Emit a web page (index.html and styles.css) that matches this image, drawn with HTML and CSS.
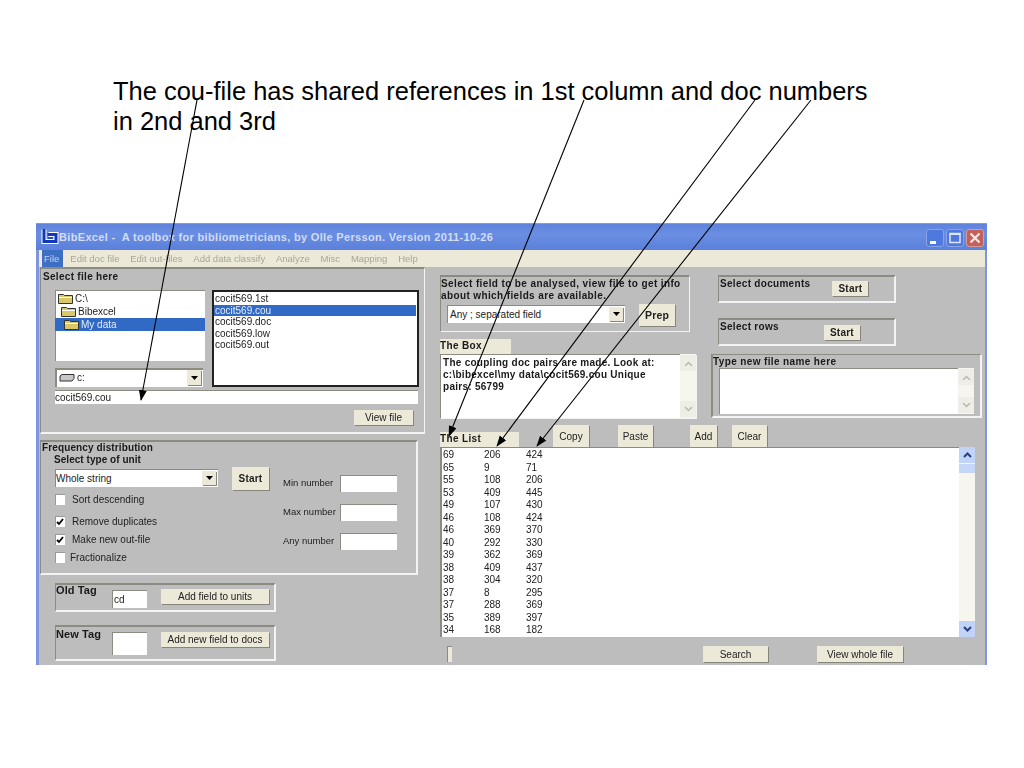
FILE: index.html
```html
<!DOCTYPE html>
<html lang="en">
<head>
<meta charset="utf-8">
<title>BibExcel</title>
<link rel="stylesheet" href="styles.css">
</head>
<body>
<div class="slide">
  <h1 class="caption">The cou-file has shared references in 1st column and doc numbers in 2nd and 3rd</h1>
  <div class="window">
    <div class="titlebar">
      <svg class="logo" width="18" height="18" viewBox="0 0 18 18"><path d="M3 1.500V13.500H15V6.500H7.500" fill="none" stroke="#fff" stroke-width="5"/><path d="M3 1V13.500H15V6.500H6.500" fill="none" stroke="#1238b8" stroke-width="3"/><path d="M7 10h5" stroke="#1238b8" stroke-width="1.500"/></svg>
      <span class="title-text">BibExcel -&nbsp; A toolbox for bibliometricians, by Olle Persson. Version 2011-10-26</span>
      <div class="win-buttons">
        <span class="win-btn"><svg width="18" height="18" viewBox="0 0 18 18"><rect x="4" y="12" width="6" height="3" fill="#fff"/></svg></span>
        <span class="win-btn"><svg width="18" height="18" viewBox="0 0 18 18"><rect x="4" y="4.500" width="10" height="9" fill="none" stroke="#dfe6fa" stroke-width="1.500"/><rect x="3.500" y="4" width="11" height="2" fill="#dfe6fa"/></svg></span>
        <span class="win-btn win-close"><svg width="18" height="18" viewBox="0 0 18 18"><path d="M4.500 4.500l9 9M13.500 4.500l-9 9" stroke="#f6e4e2" stroke-width="2.400"/></svg></span>
      </div>
    </div>
    <div class="menubar">
      <span class="menu-item menu-active">File</span>
      <span class="menu-item">Edit doc file</span>
      <span class="menu-item">Edit out-files</span>
      <span class="menu-item">Add data classify</span>
      <span class="menu-item">Analyze</span>
      <span class="menu-item">Misc</span>
      <span class="menu-item">Mapping</span>
      <span class="menu-item">Help</span>
    </div>
    <div class="form">
      <div class="col-left">
        <section class="frame file-frame">
          <div class="label-bold file-title">Select file here</div>
          <div class="file-grid">
            <div class="dirlist">
              <div class="dir-row dir-0"><svg class="folder" width="15" height="11" viewBox="0 0 15 11"><path d="M0.500 1.500h5l1 1h8v8H0.500z" fill="#d8c868" stroke="#333"/><path d="M1 4.500h13" stroke="#fff"/></svg>C:\</div>
              <div class="dir-row dir-1"><svg class="folder" width="15" height="11" viewBox="0 0 15 11"><path d="M0.500 1.500h5l1 1h8v8H0.500z" fill="#d8c868" stroke="#333"/><path d="M1 4.500h13" stroke="#fff"/></svg>Bibexcel</div>
              <div class="dir-row dir-2 selected"><svg class="folder" width="15" height="11" viewBox="0 0 15 11"><path d="M0.500 1.500h5l1 1h8v8H0.500z" fill="#d8c868" stroke="#333"/><path d="M1 4.500h13" stroke="#fff"/></svg>My data</div>
            </div>
            <div class="filelist">
              <div class="file-row">cocit569.1st</div>
              <div class="file-row selected">cocit569.cou</div>
              <div class="file-row">cocit569.doc</div>
              <div class="file-row">cocit569.low</div>
              <div class="file-row">cocit569.out</div>
            </div>
            <div class="combo drive-combo">
              <svg class="drive" width="16" height="8" viewBox="0 0 16 8"><path d="M3 0.500h12v4l-2 2.500H1V2z" fill="#c8c8c8" stroke="#333"/></svg>
              <span>c:</span>
              <span class="combo-arrow"><svg width="7" height="4" viewBox="0 0 7 4"><path d="M0 0h7L3.500 4z" fill="#000"/></svg></span>
            </div>
          </div>
          <div class="text-input file-name">cocit569.cou</div>
          <div class="view-row"><span class="btn view-btn">View file</span></div>
        </section>

        <section class="frame freq-frame">
          <div class="label-bold freq-title">Frequency distribution</div>
          <div class="freq-body">
            <div class="freq-left">
              <div class="label-bold unit-title">Select type of unit</div>
              <div class="unit-row">
                <div class="combo unit-combo"><span>Whole string</span><span class="combo-arrow"><svg width="7" height="4" viewBox="0 0 7 4"><path d="M0 0h7L3.500 4z" fill="#000"/></svg></span></div>
                <span class="btn btn-bold start-unit">Start</span>
              </div>
              <div class="check-row check-sort"><span class="check"></span><span class="check-label">Sort descending</span></div>
              <div class="check-row check-dup"><span class="check"><svg width="10" height="10" viewBox="0 0 10 10"><path d="M2 5l2 2 4-5" fill="none" stroke="#000" stroke-width="1.800"/></svg></span><span class="check-label">Remove duplicates</span></div>
              <div class="check-row check-new"><span class="check"><svg width="10" height="10" viewBox="0 0 10 10"><path d="M2 5l2 2 4-5" fill="none" stroke="#000" stroke-width="1.800"/></svg></span><span class="check-label">Make new out-file</span></div>
              <div class="check-row check-frac"><span class="check"></span><span class="check-label check-label-tight">Fractionalize</span></div>
            </div>
            <div class="freq-right">
              <div class="num-row"><span class="num-label">Min number</span><span class="text-input num-input"></span></div>
              <div class="num-row"><span class="num-label">Max number</span><span class="text-input num-input"></span></div>
              <div class="num-row"><span class="num-label">Any number</span><span class="text-input num-input"></span></div>
            </div>
          </div>
        </section>

        <section class="frame tag-frame old-tag">
          <span class="tag-label">Old Tag</span>
          <span class="text-input tag-input old-input">cd</span>
          <span class="btn tag-btn">Add field to units</span>
        </section>
        <section class="frame tag-frame new-tag">
          <span class="tag-label">New Tag</span>
          <span class="text-input tag-input new-input"></span>
          <span class="btn tag-btn">Add new field to docs</span>
        </section>
      </div>

      <div class="col-right">
        <div class="upper">
          <div class="upper-left">
            <section class="frame field-frame">
              <div class="label-bold field-title">Select field to be analysed, view file to get info about which fields are available.</div>
              <div class="field-row">
                <div class="combo field-combo"><span>Any ; separated field</span><span class="combo-arrow"><svg width="7" height="4" viewBox="0 0 7 4"><path d="M0 0h7L3.500 4z" fill="#000"/></svg></span></div>
                <span class="btn btn-bold prep-btn">Prep</span>
              </div>
            </section>
            <div class="tab-label box-label">The Box</div>
            <div class="box">
              <div class="box-text">The coupling doc pairs are made. Look at: c:\bibexcel\my data\cocit569.cou Unique pairs: 56799</div>
              <div class="scroll scroll-faded"><span class="sb-btn"><svg width="9" height="5" viewBox="0 0 9 5"><path d="M1 5l3.500-3.500L8 5" fill="none" stroke="#b8b8b0" stroke-width="1.500"/></svg></span><span class="sb-btn"><svg width="9" height="5" viewBox="0 0 9 5"><path d="M1 0l3.500 3.500L8 0" fill="none" stroke="#b8b8b0" stroke-width="1.500"/></svg></span></div>
            </div>
          </div>
          <div class="upper-right">
            <section class="frame small-frame docs-frame">
              <span class="label-bold">Select documents</span>
              <span class="btn btn-bold small-start docs-start">Start</span>
            </section>
            <section class="frame small-frame rows-frame">
              <span class="label-bold">Select rows</span>
              <span class="btn btn-bold small-start rows-start">Start</span>
            </section>
            <section class="frame type-frame">
              <div class="label-bold type-title">Type new file name here</div>
              <div class="type-box">
                <div class="scroll scroll-faded"><span class="sb-btn"><svg width="9" height="5" viewBox="0 0 9 5"><path d="M1 5l3.500-3.500L8 5" fill="none" stroke="#b8b8b0" stroke-width="1.500"/></svg></span><span class="sb-btn"><svg width="9" height="5" viewBox="0 0 9 5"><path d="M1 0l3.500 3.500L8 0" fill="none" stroke="#b8b8b0" stroke-width="1.500"/></svg></span></div>
              </div>
            </section>
          </div>
        </div>

        <div class="list-tools">
          <div class="tab-label list-label">The List</div>
          <span class="btn tool-btn copy-btn">Copy</span>
          <span class="btn tool-btn paste-btn">Paste</span>
          <span class="btn tool-btn add-btn">Add</span>
          <span class="btn tool-btn clear-btn">Clear</span>
        </div>

        <div class="listbox">
          <div class="list-rows">
            <div class="list-row"><span>69</span><span>206</span><span>424</span></div>
            <div class="list-row"><span>65</span><span>9</span><span>71</span></div>
            <div class="list-row"><span>55</span><span>108</span><span>206</span></div>
            <div class="list-row"><span>53</span><span>409</span><span>445</span></div>
            <div class="list-row"><span>49</span><span>107</span><span>430</span></div>
            <div class="list-row"><span>46</span><span>108</span><span>424</span></div>
            <div class="list-row"><span>46</span><span>369</span><span>370</span></div>
            <div class="list-row"><span>40</span><span>292</span><span>330</span></div>
            <div class="list-row"><span>39</span><span>362</span><span>369</span></div>
            <div class="list-row"><span>38</span><span>409</span><span>437</span></div>
            <div class="list-row"><span>38</span><span>304</span><span>320</span></div>
            <div class="list-row"><span>37</span><span>8</span><span>295</span></div>
            <div class="list-row"><span>37</span><span>288</span><span>369</span></div>
            <div class="list-row"><span>35</span><span>389</span><span>397</span></div>
            <div class="list-row"><span>34</span><span>168</span><span>182</span></div>
          </div>
          <div class="scroll scroll-live">
            <span class="sb-btn sb-live"><svg width="9" height="6" viewBox="0 0 9 6"><path d="M1 5l3.500-3.500L8 5" fill="none" stroke="#2a3f80" stroke-width="2"/></svg></span>
            <span class="sb-thumb"></span>
            <span class="sb-track"></span>
            <span class="sb-btn sb-live"><svg width="9" height="6" viewBox="0 0 9 6"><path d="M1 1l3.500 3.500L8 1" fill="none" stroke="#2a3f80" stroke-width="2"/></svg></span>
          </div>
        </div>

        <div class="bottom-row">
          <span class="sliver"></span>
          <span class="btn search-btn">Search</span>
          <span class="btn whole-btn">View whole file</span>
        </div>
      </div>
    </div>
  </div>
  <svg class="arrows" width="1024" height="768" viewBox="0 0 1024 768">
    <defs><marker id="head" markerWidth="11" markerHeight="9" refX="10" refY="4" orient="auto" markerUnits="userSpaceOnUse"><path d="M0 0L11 4 0 8z" fill="#000"/></marker></defs>
    <path class="arrow-line" d="M197 100L141 400" marker-end="url(#head)"/>
    <path class="arrow-line" d="M584 100L449 436" marker-end="url(#head)"/>
    <path class="arrow-line" d="M755 100L497 446" marker-end="url(#head)"/>
    <path class="arrow-line" d="M811 100L537 446" marker-end="url(#head)"/>
  </svg>
</div>
</body>
</html>
```

FILE: styles.css
```css
* { box-sizing: border-box; }
html, body { margin: 0; padding: 0; background: #fff; }
body { width: 1024px; height: 768px; overflow: hidden; font-family: "Liberation Sans", Arial, sans-serif; }
.slide { position: relative; width: 1024px; height: 768px; padding-top: 76px; }
.caption { margin: 0 0 0 113px; width: 775px; height: 147px; font-weight: 400; font-size: 25.48px; line-height: 30px; color: #000; }
.arrows { position: absolute; left: 0; top: 0; pointer-events: none; }
.arrow-line { fill: none; stroke: #000; stroke-width: 1.100; }

.window { margin-left: 36px; width: 951px; height: 442px; display: flex; flex-direction: column; filter: blur(.35px); font-size: 10px; color: #222; }
.titlebar { height: 27px; padding: 5px 3px 0 5px; display: flex; align-items: flex-start; background: linear-gradient(#5f83dc, #6a8ee2 40%, #5b80da); border-top: 1px solid #7d9ce8; }
.logo { flex: none; margin-top: -1px; }
.title-text { margin: 2px 0 0 0; font-weight: 700; font-size: 11px; letter-spacing: .33px; color: #d3dcf6; white-space: pre; }
.win-buttons { margin-left: auto; display: flex; gap: 2px; }
.win-btn { width: 18px; height: 18px; border-radius: 3px; background: #4f79dd; border: 1px solid #86a3ea; display: block; }
.win-btn svg { display: block; margin: -1px; }
.win-close { background: #c4605c; border-color: #d99a98; }

.menubar { height: 17px; margin: 0 2px 0 3px; background: #ece9d8; display: flex; align-items: center; color: #a8a59a; font-size: 9.500px; box-shadow: -3px 0 0 #7f95e0, 2px 0 0 #7f95e0; }
.menu-item { padding: 0 5px; margin-right: .8px; line-height: 17px; white-space: nowrap; }
.menu-active { background: #3d6fc4; color: #c5d3ee; padding: 0 4px 0 2px; margin-left: 3px; margin-right: 2px; }

.form { flex: 1; min-height: 0; margin: 0; display: flex; background: #bdbdbd; border-left: 3px solid #7f95e0; border-right: 2px solid #7f95e0; overflow: hidden; }
.frame { border: 2px solid #8b8b81; border-right-color: #f3f3f3; border-bottom-color: #f3f3f3; border-left-width: 1px; }
.label-bold { font-weight: 700; font-size: 10px; letter-spacing: .3px; color: #1a1a1a; }
.btn { display: flex; align-items: center; justify-content: center; background: #ece9d8; color: #222; box-shadow: 1px 1px 0 #85857c; white-space: nowrap; font-size: 10px; }
.btn-bold { font-weight: 700; letter-spacing: .2px; }
.text-input { display: block; background: #fff; box-shadow: inset 1px 1px 0 #8b8b81; font-size: 10px; }
.selected { background: #316ac5; color: #e4ecfa; }

.col-left { width: 386px; flex: none; padding-left: 1px; display: flex; flex-direction: column; }
.file-frame { width: 385px; height: 167px; padding: 2px 0 0 2px; border-right-width: 1px; }
.file-title { height: 19px; line-height: 11px; }
.file-grid { margin-left: 12px; display: grid; grid-template-columns: 150px 207px; grid-template-rows: 71px 19px; column-gap: 7px; row-gap: 7px; }
.dirlist { background: #fff; padding-top: 1px; box-shadow: inset 1px 1px 0 #8b8b81; }
.dir-row { display: flex; align-items: center; height: 13px; line-height: 13px; white-space: nowrap; }
.dir-0 { padding-left: 3px; height: 14px; }
.dir-1 { padding-left: 6px; }
.dir-2 { padding-left: 9px; }
.folder { margin-right: 2px; flex: none; }
.filelist { grid-row: 1 / 3; grid-column: 2; background: #fff; border: 2px solid #222; padding: 1px 1px 0 0; }
.file-row { height: 11.600px; line-height: 11.600px; padding-left: 1px; }
.combo { position: relative; display: flex; align-items: center; background: #fff; box-shadow: inset 0 2px 0 #8b8b81, inset 2px 0 0 #8b8b81; padding-left: 2px; }
.drive-combo { grid-column: 1; grid-row: 2; width: 148px; padding-left: 4px; gap: 2px; }
.drive { flex: none; }
.combo-arrow { position: absolute; right: 2px; top: 2px; bottom: 2px; width: 14px; background: #ece9d8; box-shadow: 1px 1px 0 #85857c; display: flex; align-items: center; justify-content: center; }
.file-name { margin: 3px 0 0 12px; width: 363px; height: 14px; line-height: 15px; box-shadow: inset 0 1px 0 #8b8b81; }
.view-row { display: flex; justify-content: flex-end; padding-right: 11px; margin-top: 6px; }
.view-btn { width: 59px; height: 15px; }

.freq-frame { margin-top: 6px; width: 378px; height: 135px; padding: 0 0 0 1px; }
.freq-title { height: 11px; line-height: 11px; letter-spacing: .12px; }
.freq-body { display: flex; padding-left: 13px; }
.freq-left { width: 228px; flex: none; }
.unit-title { height: 11px; line-height: 11px; margin: 1px 0 0 -1px; letter-spacing: .04px; }
.unit-row { display: flex; margin-top: 1px; align-items: flex-start; }
.unit-combo { width: 163px; height: 18px; margin-top: 3px; padding-left: 1px; box-shadow: inset 1px 1px 0 #8b8b81; }
.start-unit { width: 37px; height: 23px; margin: 1px 0 0 14px; }
.check-row { display: flex; align-items: center; height: 11px; }
.check-sort { margin-top: 4px; }
.check-dup { margin-top: 11px; }
.check-new { margin-top: 7px; }
.check-frac { margin-top: 7px; }
.check { width: 10px; height: 11px; background: #fff; box-shadow: inset 1px 1px 0 #999; flex: none; display: block; }
.check svg { display: block; margin-top: 1px; }
.check-label { margin-left: 7px; white-space: nowrap; }
.check-label-tight { margin-left: 5px; }
.freq-right { padding-top: 22px; display: flex; flex-direction: column; gap: 12px; }
.num-row { display: flex; align-items: center; height: 17px; }
.num-label { width: 57px; white-space: nowrap; font-size: 9.500px; padding-bottom: 3px; }
.num-input { width: 57px; height: 17px; }

.tag-frame { margin-left: 15px; width: 221px; display: flex; align-items: flex-start; }
.old-tag { margin-top: 8px; height: 29px; }
.new-tag { margin-top: 13px; height: 36px; }
.tag-label { width: 56px; font-weight: 700; font-size: 11px; letter-spacing: .1px; color: #1a1a1a; line-height: 12px; margin-top: 1px; }
.old-tag .tag-label { margin-top: -1px; }
.tag-input { width: 35px; padding-top: 4px; padding-left: 2px; }
.old-input { height: 18px; margin-top: 5px; line-height: 12px; }
.new-input { height: 23px; margin-top: 5px; }
.tag-btn { width: 108px; height: 15px; margin-left: 14px; }
.old-tag .tag-btn { margin-top: 4px; }
.new-tag .tag-btn { margin-top: 5px; }

.col-right { flex: 1; min-width: 0; padding: 8px 0 0 15px; display: flex; flex-direction: column; }
.upper { display: flex; height: 143px; }
.upper-left { width: 256px; flex: none; }
.upper-right { margin-left: 15px; width: 271px; }
.field-frame { width: 250px; height: 57px; padding: 1px 0 0 0; border-width: 2px 1px 1px 1px; }
.field-title { line-height: 12px; font-size: 10px; letter-spacing: .38px; width: 248px; }
.field-row { display: flex; align-items: flex-start; margin-top: 3px; padding-left: 6px; }
.field-combo { width: 178px; height: 18px; padding-left: 3px; box-shadow: inset 1px 1px 0 #8b8b81; }
.prep-btn { width: 36px; height: 22px; margin: -1px 0 0 14px; font-size: 10.500px; }
.tab-label { background: #ece9d8; font-weight: 700; font-size: 10px; letter-spacing: .35px; color: #1a1a1a; }
.box-label { margin-top: 7px; width: 71px; height: 15px; line-height: 14px; }
.box { height: 64px; display: flex; background: #fff; box-shadow: inset 1px 1px 0 #8b8b81, 1px 1px 0 #f3f3f3; }
.box-text { flex: 1; min-width: 0; padding: 3px 20px 0 3px; font-weight: 700; line-height: 12px; letter-spacing: .27px; color: #1a1a1a; }
.scroll { width: 16px; flex: none; display: flex; flex-direction: column; }
.scroll-faded { background: #f6f6ef; justify-content: space-between; padding: 1px 0; }
.sb-btn { height: 16px; display: flex; align-items: center; justify-content: center; background: #eeeee6; }
.small-frame { display: flex; align-items: flex-start; width: 178px; height: 28px; margin-left: 7px; padding: 1px 0 0 1px; }
.rows-frame { margin-top: 15px; }
.small-start { width: 36px; height: 15px; font-size: 10px; }
.docs-start { margin-left: 22px; margin-top: 3px; }
.rows-start { margin-left: 45px; margin-top: 4px; }
.type-frame { margin-top: 8px; height: 64px; border-width: 1px 2px 2px 2px; }
.type-title { height: 13px; line-height: 13px; letter-spacing: .37px; }
.type-box { margin-left: 6px; width: 255px; height: 46px; background: #fff; box-shadow: inset 1px 1px 0 #8b8b81; display: flex; justify-content: flex-end; }

.list-tools { display: flex; align-items: flex-end; height: 29px; }
.list-label { width: 79px; height: 15px; line-height: 14px; }
.tool-btn { height: 22px; }
.copy-btn { width: 36px; margin-left: 34px; }
.paste-btn { width: 35px; margin-left: 29px; }
.add-btn { width: 27px; margin-left: 37px; }
.clear-btn { width: 35px; margin-left: 15px; }

.listbox { width: 535px; height: 190px; display: flex; background: #fff; box-shadow: inset 2px 0 0 #8b8b81, inset 0 1px 0 #8b8b81; }
.list-rows { flex: 1; min-width: 0; padding: 2px 0 0 3px; }
.list-row { display: grid; grid-template-columns: 41px 42px 40px; height: 12.500px; line-height: 12.500px; font-size: 10px; }
.scroll-live { background: #f6f6ef; }
.sb-live { background: #c2d3f8; }
.sb-thumb { height: 9px; background: #c6d6f8; margin-top: 1px; }
.sb-track { flex: 1; }

.bottom-row { display: flex; align-items: flex-start; padding-top: 9px; }
.sliver { width: 5px; height: 16px; margin-left: 7px; background: #ece9d8; box-shadow: inset 1px 1px 0 #8b8b81; }
.search-btn { width: 65px; height: 16px; margin-left: 251px; }
.whole-btn { width: 86px; height: 16px; margin-left: 49px; }
```
